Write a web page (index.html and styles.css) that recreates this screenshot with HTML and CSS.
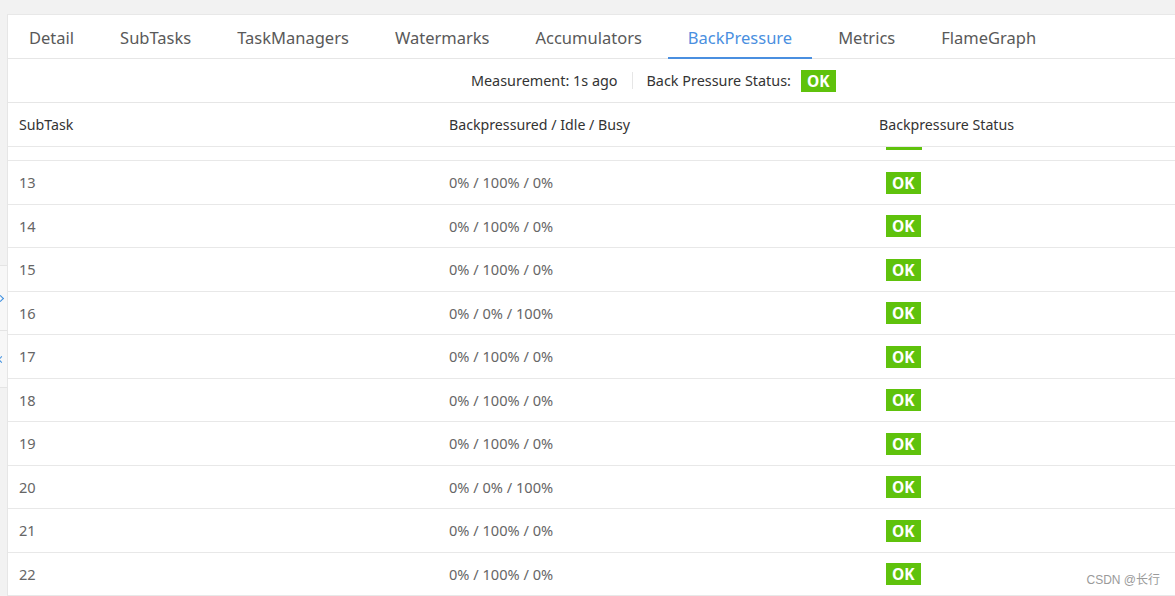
FILE: index.html
```html
<!DOCTYPE html>
<html>
<head>
<meta charset="utf-8">
<link rel="stylesheet" href="styles.css">
</head>
<body>
<div class="page">
  <aside class="side">
    <div class="side-top"></div>
    <div class="side-item"><span class="chev right"></span></div>
    <div class="side-item second"><span class="chev left"></span></div>
  </aside>
  <main class="panel">
    <nav class="tabs">
      <span class="tab">Detail</span>
      <span class="tab">SubTasks</span>
      <span class="tab">TaskManagers</span>
      <span class="tab">Watermarks</span>
      <span class="tab">Accumulators</span>
      <span class="tab active">BackPressure</span>
      <span class="tab">Metrics</span>
      <span class="tab">FlameGraph</span>
    </nav>
    <div class="status">
      <span>Measurement: 1s ago</span>
      <span class="divider"></span>
      <span>Back Pressure Status:</span>
      <span class="badge">OK</span>
    </div>
    <div class="table">
      <div class="row head">
        <div class="cell">SubTask</div>
        <div class="cell">Backpressured / Idle / Busy</div>
        <div class="cell">Backpressure Status</div>
      </div>
      <div class="tbody">
        <div class="rows">
          <div class="row partial"><div class="cell"></div><div class="cell"></div><div class="cell"><span class="badge blank"></span></div></div>
          <div class="row"><div class="cell">13</div><div class="cell">0% / 100% / 0%</div><div class="cell"><span class="badge">OK</span></div></div>
          <div class="row"><div class="cell">14</div><div class="cell">0% / 100% / 0%</div><div class="cell"><span class="badge">OK</span></div></div>
          <div class="row"><div class="cell">15</div><div class="cell">0% / 100% / 0%</div><div class="cell"><span class="badge">OK</span></div></div>
          <div class="row"><div class="cell">16</div><div class="cell">0% / 0% / 100%</div><div class="cell"><span class="badge">OK</span></div></div>
          <div class="row"><div class="cell">17</div><div class="cell">0% / 100% / 0%</div><div class="cell"><span class="badge">OK</span></div></div>
          <div class="row"><div class="cell">18</div><div class="cell">0% / 100% / 0%</div><div class="cell"><span class="badge">OK</span></div></div>
          <div class="row"><div class="cell">19</div><div class="cell">0% / 100% / 0%</div><div class="cell"><span class="badge">OK</span></div></div>
          <div class="row"><div class="cell">20</div><div class="cell">0% / 0% / 100%</div><div class="cell"><span class="badge">OK</span></div></div>
          <div class="row"><div class="cell">21</div><div class="cell">0% / 100% / 0%</div><div class="cell"><span class="badge">OK</span></div></div>
          <div class="row"><div class="cell">22</div><div class="cell">0% / 100% / 0%</div><div class="cell"><span class="badge">OK</span></div></div>
        </div>
      </div>
    </div>
  </main>
  <div class="watermark">CSDN @长行</div>
</div>
</body>
</html>
```

FILE: styles.css
```css
html, body {
  margin: 0;
  padding: 0;
  background: #f2f2f2;
  overflow: hidden;
}
body {
  font-family: "Noto Sans", "Open Sans", "Noto Sans CJK SC", sans-serif;
  color: #333;
}
.page {
  display: flex;
  width: 1175px;
  height: 596px;
  padding-top: 14px;
  box-sizing: border-box;
  position: relative;
  overflow: hidden;
}
.side {
  width: 7px;
  flex: none;
  display: flex;
  flex-direction: column;
}
.side-top {
  height: 251px;
}
.side-item {
  height: 64px;
  border-top: 1px solid #e4e4e4;
  background: #f7f7f7;
  display: flex;
  align-items: center;
  overflow: hidden;
}
.side-item.second {
  height: 56px;
  border-bottom: 1px solid #e4e4e4;
}
.chev {
  display: block;
  width: 4px;
  height: 4px;
  border-top: 1.5px solid #3d8fe0;
  border-right: 1.5px solid #3d8fe0;
  transform: rotate(45deg);
  margin-left: -2px;
}
.chev.left {
  transform: rotate(-135deg);
  margin-left: -1px;
}
.panel {
  width: 1291px;
  flex: none;
  background: #fff;
  border-left: 1px solid #e6e6e6;
  border-top: 1px solid #e8e8e8;
  display: flex;
  flex-direction: column;
}
.tabs {
  display: flex;
  gap: 6px;
  height: 43px;
  border-bottom: 1px solid #e6e6e6;
  padding-left: 1px;
}
.tab {
  padding: 3px 20px 0;
  font-size: 16.5px;
  line-height: 40px;
  color: #595959;
  box-sizing: border-box;
  height: 44px;
}
.tab.active {
  color: #4a8fe0;
  border-bottom: 2px solid #4a8fe0;
}
.status {
  height: 43px;
  border-bottom: 1px solid #e6e6e6;
  display: flex;
  align-items: center;
  justify-content: center;
  font-size: 14.4px;
  color: #333;
}
.divider {
  width: 1px;
  height: 17px;
  background: #e6e6e6;
  margin: 0 14px;
}
.badge {
  display: inline-block;
  background: #5fc20c;
  color: #fff;
  font-weight: bold;
  font-size: 15.5px;
  line-height: 22px;
  height: 22px;
  padding: 0 6.5px 0 6px;
  margin-left: 10px;
  vertical-align: middle;
}
.table {
  display: flex;
  flex-direction: column;
  flex: 1;
  min-height: 0;
}
.row {
  display: grid;
  grid-template-columns: 430px 430px 431px;
  height: 43.5px;
  align-items: center;
  border-bottom: 1px solid #e8e8e8;
  box-sizing: border-box;
  font-size: 14.6px;
  color: #666;
}
.row.head {
  height: 44px;
  color: #333;
  font-size: 14.2px;
}
.cell {
  padding-left: 11px;
}
.row .badge {
  margin-left: 7px;
}
.badge.blank {
  width: 23px;
}
.tbody {
  flex: 1;
  overflow: hidden;
}
.rows {
  margin-top: -29.5px;
}
.watermark {
  position: absolute;
  right: 15px;
  bottom: 9px;
  font-size: 12px;
  color: #9a9a9a;
  font-family: "Liberation Sans", "Noto Sans CJK SC", sans-serif;
}
```
